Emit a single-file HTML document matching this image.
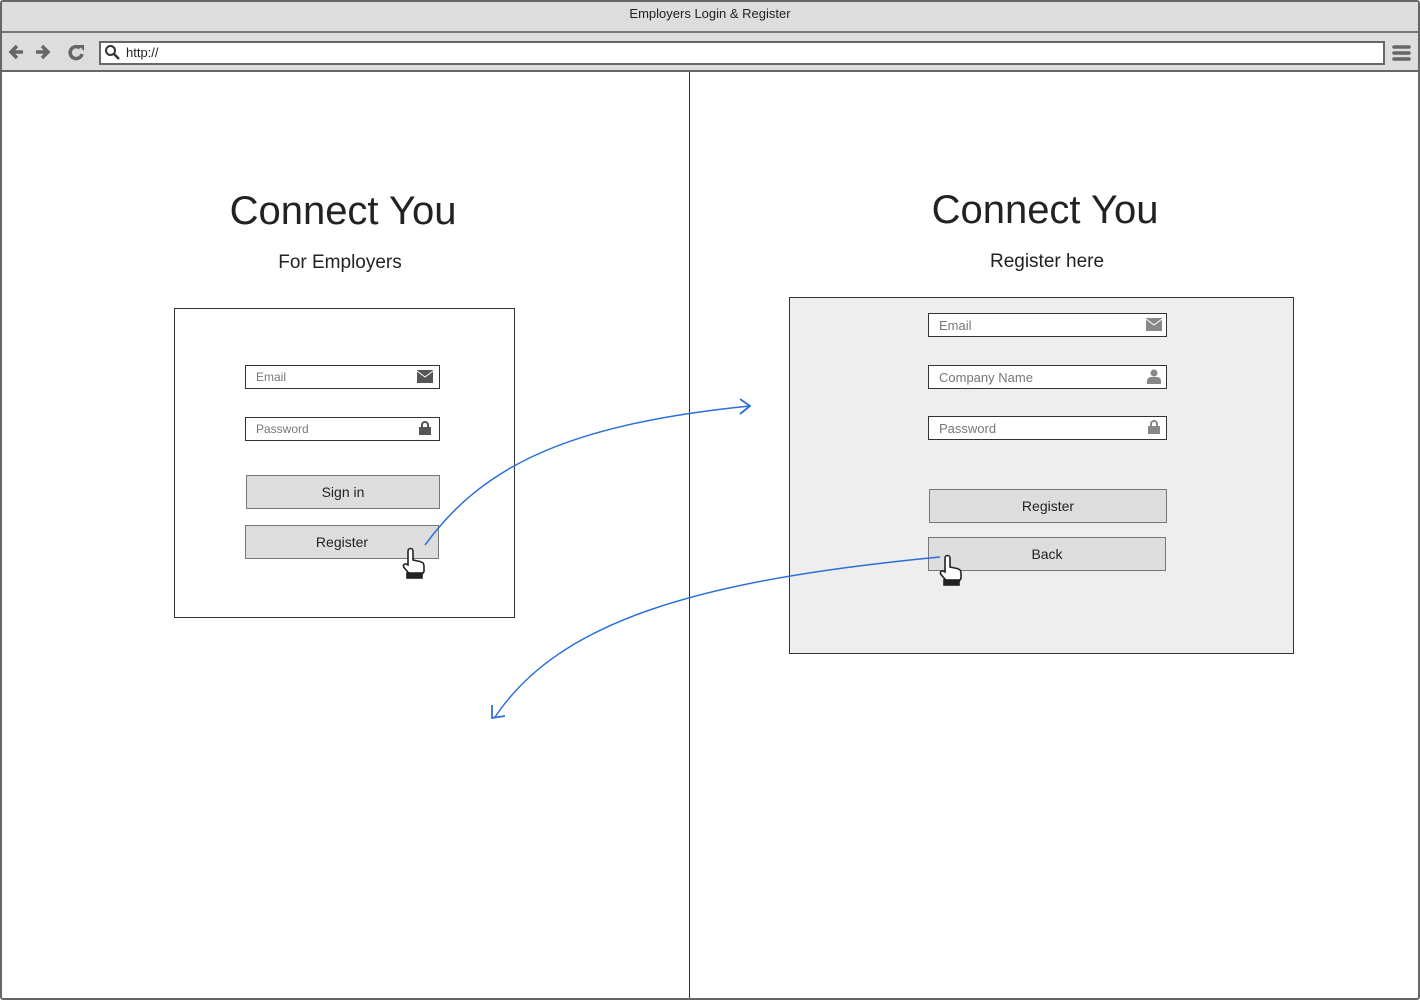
<!DOCTYPE html>
<html><head><style>
*{margin:0;padding:0;box-sizing:border-box}
body{width:1420px;height:1000px;position:relative;background:#fff;font-family:"Liberation Sans",sans-serif;color:#222;overflow:hidden}
.a{position:absolute}
.inp{position:absolute;background:#fff;border:1px solid #333;font-size:12px;color:#777;padding-left:10px;display:flex;align-items:center}
.btn{position:absolute;background:#ddd;border:1px solid #777;font-size:14px;display:flex;align-items:center;justify-content:center;color:#222}
</style></head><body>
<div class="a" style="left:0;top:0;width:1420px;height:1000px;border:2px solid #666;border-radius:3px"></div>
<div class="a" style="left:2px;top:2px;width:1416px;height:70px;background:#ddd;border-bottom:2px solid #666"></div>
<div class="a" style="left:2px;top:31px;width:1416px;height:2px;background:#777"></div>
<div class="a" style="left:0;top:6px;width:1420px;text-align:center;font-size:13px">Employers Login &amp; Register</div>
<svg class="a" style="left:8px;top:42px" width="80" height="22">
<path d="M3 10h12M9 4l-6 6 6 6" stroke="#666" stroke-width="3.5" fill="none"/>
<path d="M28 10h12M34 4l6 6-6 6" stroke="#666" stroke-width="3.5" fill="none"/>
<path d="M72 6a6 6 0 1 0 2 6" stroke="#666" stroke-width="3.5" fill="none"/><path d="M70 3l6 0 0 6z" fill="#666"/>
</svg>
<div class="a" style="left:99px;top:41px;width:1286px;height:24px;background:#fff;border:2px solid #666"></div>
<svg class="a" style="left:104px;top:44px" width="18" height="18"><circle cx="6.5" cy="6.5" r="4.5" stroke="#333" stroke-width="2" fill="none"/><path d="M10 10l5 5" stroke="#333" stroke-width="2.5"/></svg>
<div class="a" style="left:126px;top:45px;font-size:13px">http://</div>
<svg class="a" style="left:1392px;top:44px" width="20" height="18"><path d="M2 3h15M2 9h15M2 15h15" stroke="#666" stroke-width="3.5" stroke-linecap="round"/></svg>
<div class="a" style="left:689px;top:72px;width:1px;height:926px;background:#333"></div>

<div class="a" style="left:0;top:189px;width:686px;text-align:center;font-size:40px">Connect You</div>
<div class="a" style="left:0;top:252px;width:680px;text-align:center;font-size:19px">For Employers</div>
<div class="a" style="left:174px;top:308px;width:341px;height:310px;border:1px solid #333"></div>
<div class="inp" style="left:245px;top:365px;width:195px;height:24px">Email</div>
<svg class="a" style="left:417px;top:370px" width="16" height="14"><rect width="16" height="13" fill="#555"/><path d="M0 1l8 6 8-6" stroke="#fff" fill="none"/></svg>
<div class="inp" style="left:245px;top:417px;width:195px;height:24px">Password</div>
<svg class="a" style="left:419px;top:421px" width="12" height="14"><path d="M3 6V4a3 3 0 0 1 6 0v2" stroke="#555" stroke-width="2" fill="none"/><rect y="6" width="12" height="8" fill="#555"/></svg>
<div class="btn" style="left:246px;top:475px;width:194px;height:34px">Sign in</div>
<div class="btn" style="left:245px;top:525px;width:194px;height:34px">Register</div>

<div class="a" style="left:700px;top:188px;width:690px;text-align:center;font-size:40px">Connect You</div>
<div class="a" style="left:700px;top:251px;width:694px;text-align:center;font-size:19px">Register here</div>
<div class="a" style="left:789px;top:297px;width:505px;height:357px;border:1px solid #333;background:#eee"></div>
<div class="inp" style="left:928px;top:313px;width:239px;height:24px;font-size:13px">Email</div>
<svg class="a" style="left:1146px;top:318px" width="16" height="14"><rect width="16" height="13" fill="#888"/><path d="M0 1l8 6 8-6" stroke="#fff" fill="none"/></svg>
<div class="inp" style="left:928px;top:365px;width:239px;height:24px;font-size:13px">Company Name</div>
<svg class="a" style="left:1147px;top:369px" width="14" height="15"><circle cx="7" cy="4" r="3.5" fill="#888"/><path d="M0 15v-3a4 4 0 0 1 4-4h6a4 4 0 0 1 4 4v3z" fill="#888"/></svg>
<div class="inp" style="left:928px;top:416px;width:239px;height:24px;font-size:13px">Password</div>
<svg class="a" style="left:1148px;top:420px" width="12" height="14"><path d="M3 6V4a3 3 0 0 1 6 0v2" stroke="#888" stroke-width="2" fill="none"/><rect y="6" width="12" height="8" fill="#888"/></svg>
<div class="btn" style="left:929px;top:489px;width:238px;height:34px">Register</div>
<div class="btn" style="left:928px;top:537px;width:238px;height:34px">Back</div>

<svg class="a" style="left:0;top:0" width="1420" height="1000">
<path d="M425 545C480 470 560 425 750 406" stroke="#2a6fdb" stroke-width="1.5" fill="none"/>
<path d="M740 399l10 7-10 8" stroke="#2a6fdb" stroke-width="1.8" fill="none"/>
<path d="M940 557C700 580 560 620 495 717" stroke="#2a6fdb" stroke-width="1.5" fill="none"/>
<path d="M492 705l0 13 13-2" stroke="#2a6fdb" stroke-width="1.8" fill="none"/>
<g id="h" fill="#fff" stroke="#222" stroke-width="1.6">
<path d="M408 565v-14a2.5 2.5 0 0 1 5 0v9l7 1.5c3 .8 4 2 4 5v5l-2 3h-12l-6-7a2 2 0 0 1 3-3z"/>
<rect x="407" y="573" width="15" height="5" fill="#222"/>
</g>
<use href="#h" transform="translate(537 7)"/>
</svg>
</body></html>
